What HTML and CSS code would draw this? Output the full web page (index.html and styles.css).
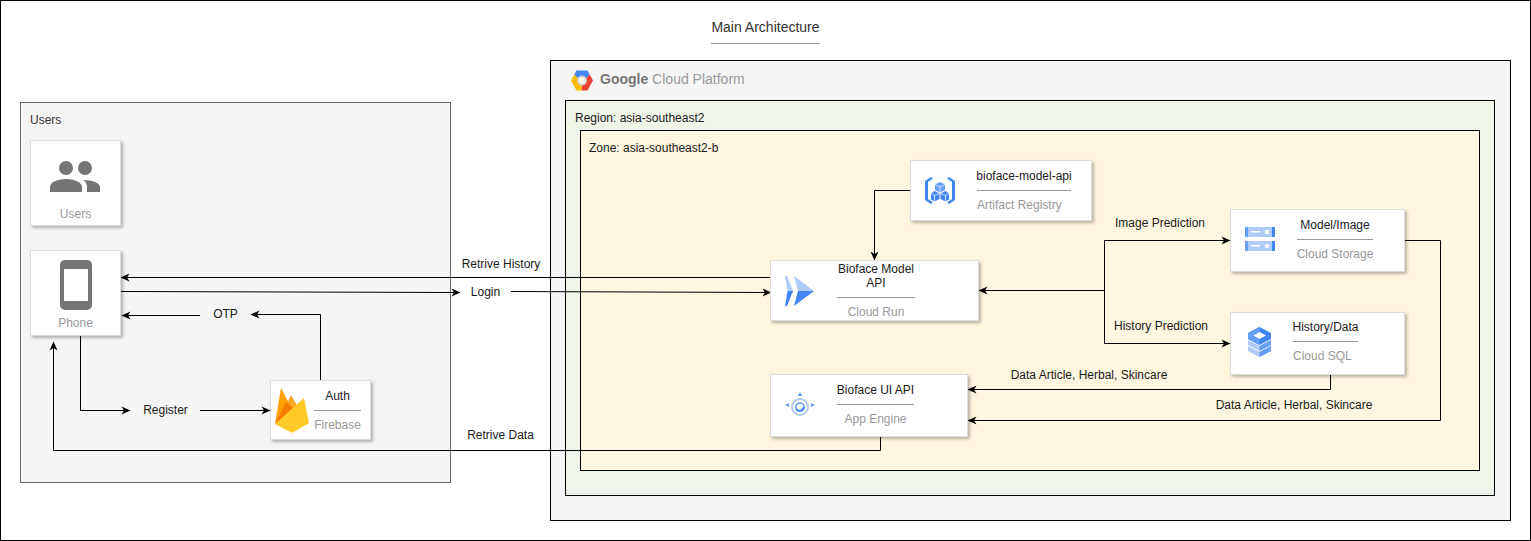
FILE: index.html
```html
<!DOCTYPE html>
<html lang="en">
<head>
  <meta charset="UTF-8" />
  <meta name="viewport" content="width=device-width, initial-scale=1.0"/>
  <title>Main Architecture</title>
  <link rel="stylesheet" href="styles.css">
</head>
<body>
  <div class="canvas">

    <div class="title">Main Architecture</div>

    <!-- Group boxes -->
    <div class="group users-box"><span class="group-name">Users</span></div>
    <div class="group gcp-box">
      <div class="gcp-head">
        <svg class="gcp-logo" viewBox="0 0 22 21">
          <path fill="#4285f4" d="M5.500 0.500H16.500L18.700 4.500L15 8.500A4.900 4.900 0 0 0 7 8.500L3.300 4.500Z"/>
          <path fill="#ea4335" d="M18.700 4.500L22 10.500L16.500 20.500H11V15.400A4.900 4.900 0 0 0 15 8.500Z"/>
          <path fill="#fbbc05" d="M3.300 4.500L7 8.500A4.900 4.900 0 0 0 11 15.400V20.500H5.500L0 10.500Z"/>
          <circle fill="#cfcfcf" cx="11" cy="10.500" r="4.900"/>
          <circle fill="#f5f5f5" cx="11" cy="10.500" r="3.300"/>
        </svg>
        <span class="gcp-name"><b>Google</b> Cloud Platform</span>
      </div>
    </div>
    <div class="group region-box"><span class="group-name">Region: asia-southeast2</span></div>
    <div class="group zone-box"><span class="group-name">Zone: asia-southeast2-b</span></div>

    <!-- Connectors -->
    <svg class="wires" viewBox="0 0 1531 541">
      <defs>
        <marker id="arrow" markerUnits="userSpaceOnUse" markerWidth="11" markerHeight="11" refX="9.500" refY="5.500" orient="auto">
          <path d="M1 1.500L10 5.500L1 9.500L3.500 5.500Z" fill="#000"/>
        </marker>
      </defs>
      <path class="wire" d="M770 277.500H121"/>
      <path class="wire" d="M120 291.500L460 292.500"/>
      <path class="wire" d="M511 291.500L771 292.500"/>
      <path class="wire" d="M320.500 380V314.500H251"/>
      <path class="wire" d="M200 315.500H122"/>
      <path class="wire" d="M80.500 335V410.500H130"/>
      <path class="wire" d="M200 410.500H270"/>
      <path class="wire" d="M880.500 436V450.500H53.500V342"/>
      <path class="wire" d="M910 190.500H874.500V260"/>
      <path class="wire" d="M1104.500 290.500H979"/>
      <path class="wire" d="M1104.500 290.500V240.500H1230"/>
      <path class="wire" d="M1104.500 290.500V343.500H1230"/>
      <path class="wire" d="M1330.500 375V389.500H968"/>
      <path class="wire" d="M1405 240.500H1440.500V420.500H968"/>
    </svg>

    <!-- Edge labels -->
    <span class="label lb-history">Retrive History</span>
    <span class="label lb-login">Login</span>
    <span class="label lb-otp">OTP</span>
    <span class="label lb-register">Register</span>
    <span class="label lb-data">Retrive Data</span>
    <span class="label lb-image">Image Prediction</span>
    <span class="label lb-predict">History Prediction</span>
    <span class="label lb-sql">Data Article, Herbal, Skincare</span>
    <span class="label lb-storage">Data Article, Herbal, Skincare</span>

    <!-- Users column -->
    <div class="card card-tall n-users">
      <svg class="ico-users" viewBox="0 0 50 31">
        <circle cx="16" cy="7" r="7" fill="#757575"/>
        <circle cx="35" cy="7" r="7" fill="#757575"/>
        <path fill="#757575" d="M0 31V26C0 21 8 18 16 18S32 21 32 26V31Z"/>
        <path fill="#757575" d="M33 19C43 19 50 22 50 26V31H37V26C37 23 36 21 33 19Z"/>
      </svg>
      <span class="sub">Users</span>
    </div>

    <div class="card card-tall n-phone">
      <svg class="ico-phone" viewBox="0 0 32 50">
        <rect width="32" height="50" rx="5" fill="#757575"/>
        <rect x="4" y="9" width="24" height="32" fill="#fff"/>
      </svg>
      <span class="sub">Phone</span>
    </div>

    <div class="card n-auth">
      <svg class="ico-firebase" viewBox="0 0 34 45">
        <path fill="#ffa000" d="M0 36L6 0L15 17Z"/>
        <path fill="#ffa726" d="M10 20L16 7L23 19L14 27Z"/>
        <path fill="#f57c00" d="M0 36L11 14L15 17L20 22Z"/>
        <path fill="#ffca28" d="M0 36L29 10L34 35L17 45Z"/>
      </svg>
      <div class="info">
        <span class="name">Auth</span>
        <span class="rule"></span>
        <span class="sub">Firebase</span>
      </div>
    </div>

    <!-- GCP services -->
    <div class="card n-artifact">
      <svg class="ico-artifact" viewBox="0 0 30 27">
        <path fill="#4285f4" d="M6 0L8 1.500L3 5V22L8 25.500L6 27L0 23V4Z"/>
        <path fill="#4285f4" d="M24 0L22 1.500L27 5V22L22 25.500L24 27L30 23V4Z"/>
        <path fill="#669df6" d="M15 5L20 7.500V13L15 15.500L10 13V7.500Z"/>
        <path fill="#4285f4" d="M9.500 14L14.500 16.500V22L9.500 24.500L6 22.500V16.500Z"/>
        <path fill="#4285f4" d="M20.500 14L24 16.500V22.500L20.500 24.500L15.500 22V16.500Z"/>
        <path fill="none" stroke="#fff" stroke-width=".7" d="M10 7.500L15 10L20 7.500M15 10V15M6 16.500L9.500 18.500L14.500 16.500M9.500 18.500V24M15.500 16.500L20.500 18.500L24 16.500M20.500 18.500V24"/>
      </svg>
      <div class="info">
        <span class="name">bioface-model-api</span>
        <span class="rule"></span>
        <span class="sub sub-left">Artifact Registry</span>
      </div>
    </div>

    <div class="card n-run">
      <svg class="ico-run" viewBox="0 0 29 30">
        <path fill="#aecbfa" d="M0 0H2L8 15H2.500Z"/>
        <path fill="#aecbfa" d="M9 0L29 15H13Z"/>
        <path fill="#4285f4" d="M2.500 15H8L2 30H0Z"/>
        <path fill="#4285f4" d="M13 15H29L9 30Z"/>
      </svg>
      <div class="info">
        <span class="name">Bioface Model<br>API</span>
        <span class="rule"></span>
        <span class="sub">Cloud Run</span>
      </div>
    </div>

    <div class="card n-engine">
      <svg class="ico-engine" viewBox="0 0 30 24">
        <path fill="#669df6" d="M15 0L17.500 4H12.500Z"/>
        <path fill="#669df6" d="M0 13L4 11V15Z"/>
        <path fill="#669df6" d="M30 13L26 11V15Z"/>
        <circle cx="15" cy="15" r="8" fill="none" stroke="#aecbfa" stroke-width="2"/>
        <circle cx="15" cy="15" r="4" fill="none" stroke="#669df6" stroke-width="1.600"/>
        <path fill="none" stroke="#4285f4" stroke-width="2" d="M11 17A4.500 4.500 0 0 0 19 15"/>
      </svg>
      <div class="info">
        <span class="name">Bioface UI API</span>
        <span class="rule"></span>
        <span class="sub">App Engine</span>
      </div>
    </div>

    <div class="card n-storage">
      <svg class="ico-storage" viewBox="0 0 30 24">
        <rect y="0" width="30" height="10" fill="#aecbfa"/>
        <rect y="14" width="30" height="10" fill="#aecbfa"/>
        <rect y="0" width="3" height="10" fill="#669df6"/>
        <rect y="14" width="3" height="10" fill="#669df6"/>
        <rect x="27" y="0" width="3" height="10" fill="#4285f4"/>
        <rect x="27" y="14" width="3" height="10" fill="#4285f4"/>
        <rect x="6" y="4" width="9" height="1.500" fill="#fff"/>
        <rect x="6" y="18" width="9" height="1.500" fill="#fff"/>
        <circle cx="22" cy="5" r="2.200" fill="#fff"/>
        <circle cx="22" cy="19" r="2.200" fill="#fff"/>
      </svg>
      <div class="info">
        <span class="name">Model/Image</span>
        <span class="rule"></span>
        <span class="sub">Cloud Storage</span>
      </div>
    </div>

    <div class="card n-sql">
      <svg class="ico-sql" viewBox="0 0 23 30">
        <path fill="#aecbfa" d="M0 13L11.500 19L23 13V18L11.500 24L0 18Z"/>
        <path fill="#aecbfa" d="M0 19L11.500 25L23 19V24L11.500 30L0 24Z"/>
        <path fill="#669df6" d="M23 13V18L11.500 24V19Z"/>
        <path fill="#669df6" d="M23 19V24L11.500 30V25Z"/>
        <path fill="#4285f4" fill-rule="evenodd" d="M11.500 0L23 6V12L11.500 18L0 12V6ZM11.500 5L5 8.500L11.500 12L18 8.500Z"/>
        <path fill="#669df6" d="M0 6L11.500 0V5L5 8.500V9L11.500 12V18L0 12Z"/>
      </svg>
      <div class="info">
        <span class="name">History/Data</span>
        <span class="rule"></span>
        <span class="sub sub-left">Cloud SQL</span>
      </div>
    </div>

  </div>
</body>
</html>
```

FILE: styles.css
```css
* {
  box-sizing: border-box;
  font-family: "Liberation Sans", Arial, sans-serif;
}

body {
  margin: 0;
  background: #fff;
  color: #1a1a1a;
  font-size: 12px;
  overflow: hidden;
}

.canvas {
  position: relative;
  width: 1531px;
  height: 541px;
  border: 1px solid #000;
  background: #fff;
  overflow: hidden;
}

/* canvas is inside a 1px border, so offsets below are minus 1 */
.title {
  position: absolute;
  left: 710px;
  top: 18px;
  width: 109px;
  height: 25px;
  border-bottom: 1px solid #999;
  font-size: 14px;
  color: #333;
  text-align: center;
  white-space: nowrap;
}

.group {
  position: absolute;
  border: 1px solid #000;
}

.group-name {
  display: block;
  padding: 10px 0 0 9px;
}

.users-box {
  left: 19px;
  top: 101px;
  width: 431px;
  height: 381px;
  border-color: #666;
  background: #f5f5f5;
  color: #333;
}

.gcp-box {
  left: 549px;
  top: 59px;
  width: 961px;
  height: 461px;
  background: #f5f5f5;
}

.gcp-head {
  display: flex;
  align-items: center;
  gap: 7px;
  padding: 9px 0 0 20px;
}

.gcp-logo {
  width: 22px;
  height: 21px;
}

.gcp-name {
  padding-bottom: 3px;
  font-size: 14px;
  color: #999;
}

.gcp-name b {
  color: #757575;
}

.region-box {
  left: 564px;
  top: 99px;
  width: 930px;
  height: 396px;
  background: #f0f5ea;
}

.zone-box {
  left: 579px;
  top: 129px;
  width: 900px;
  height: 341px;
  background: #fff6e0;
}

.zone-box .group-name {
  padding-left: 8px;
}

.wires {
  position: absolute;
  left: -1px;
  top: -1px;
  width: 1531px;
  height: 541px;
}

.wire {
  fill: none;
  stroke: #000;
  stroke-width: 1;
  marker-end: url(#arrow);
}

.label {
  position: absolute;
  transform: translate(-50%, -50%);
  white-space: nowrap;
}

.lb-history { left: 500px; top: 263px; }
.lb-login { left: 484.500px; top: 291px; }
.lb-otp { left: 224.500px; top: 313px; }
.lb-register { left: 164.500px; top: 409px; }
.lb-data { left: 499.500px; top: 434px; }
.lb-image { left: 1159px; top: 222px; }
.lb-predict { left: 1160px; top: 325px; }
.lb-sql { left: 1088px; top: 374px; }
.lb-storage { left: 1293px; top: 404px; }

.card {
  position: absolute;
  display: flex;
  align-items: center;
  background: #fff;
  border: 1px solid #ddd;
  box-shadow: 2px 2px 3px rgba(0, 0, 0, 0.28);
}

.card-tall {
  flex-direction: column;
  justify-content: flex-end;
  padding-bottom: 5px;
}

.card svg {
  flex: none;
}

.info {
  display: flex;
  flex-direction: column;
  align-items: center;
  text-align: center;
  line-height: 14px;
  white-space: nowrap;
}

.rule {
  align-self: stretch;
  height: 1px;
  margin: 7px 0;
  background: #999;
}

.sub {
  color: #999;
}

.sub-left {
  align-self: flex-start;
}

.n-users { left: 29px; top: 139px; width: 91px; height: 86px; padding-bottom: 4px; }
.n-phone { left: 29px; top: 249px; width: 91px; height: 86px; }
.n-auth { left: 269px; top: 379px; width: 101px; height: 60px; }
.n-artifact { left: 909px; top: 159px; width: 182px; height: 61px; }
.n-run { left: 769px; top: 259px; width: 209px; height: 61px; }
.n-engine { left: 769px; top: 373px; width: 198px; height: 63px; padding-bottom: 3px; }
.n-storage { left: 1229px; top: 208px; width: 175px; height: 63px; padding-bottom: 2px; }
.n-sql { left: 1229px; top: 311px; width: 175px; height: 63px; padding-bottom: 4px; }

.ico-users { width: 50px; height: 31px; margin: 0 1px 15px 0; }
.ico-phone { width: 32px; height: 50px; margin-bottom: 6px; }
.ico-firebase { width: 34px; height: 45px; margin-left: 4px; }
.ico-artifact { width: 30px; height: 27px; margin-left: 14px; }
.ico-run { width: 29px; height: 30px; margin-left: 14px; }
.ico-engine { width: 30px; height: 24px; margin-left: 14px; }
.ico-storage { width: 30px; height: 24px; margin: 0 0 2px 14px; }
.ico-sql { width: 23px; height: 30px; margin-left: 17px; }

.n-auth .info { width: 47px; margin-left: 5px; }
.n-artifact .info { width: 94px; margin-left: 22px; }
.n-run .info { width: 78px; margin-left: 23px; }
.n-engine .info { width: 77px; margin-left: 22px; }
.n-storage .info { width: 76px; margin-left: 22px; }
.n-sql .info { width: 65px; margin-left: 22px; }
```
